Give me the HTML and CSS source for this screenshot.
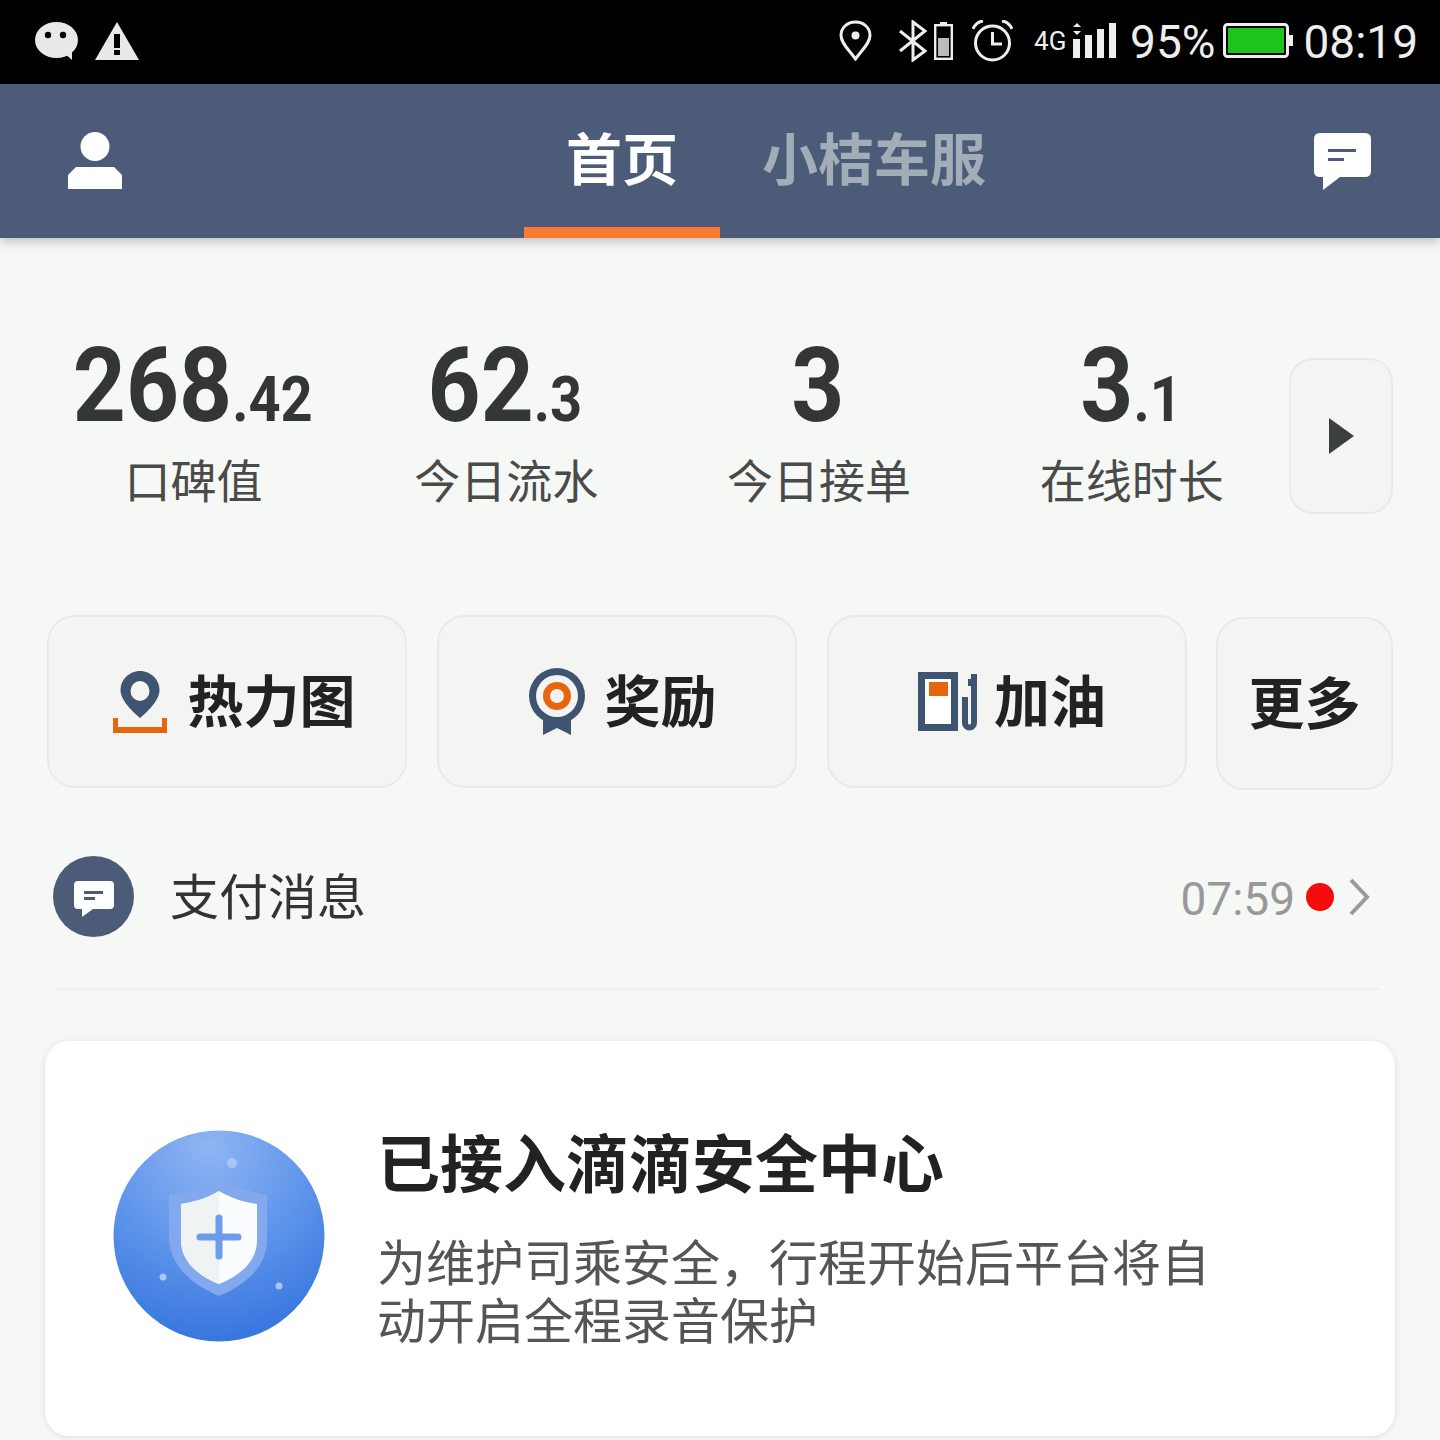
FILE: index.html
```html
<!DOCTYPE html>
<html lang="zh-CN">

<head>
    <meta charset="UTF-8">
    <meta name="viewport" content="width=device-width, initial-scale=1.0">
    <title>首页</title>
    <link rel="stylesheet" href="styles.css">
</head>

<body>
    <div class="status-bar">
        <svg class="st-wechat" viewBox="0 0 44 38"><ellipse cx="21.500" cy="18" rx="21.500" ry="18" fill="#e8e8e8"/><path d="M28 30 L37 38 L37 28 Z" fill="#e8e8e8"/><circle cx="13" cy="13" r="3.200" fill="#000"/><circle cx="28" cy="13" r="3.200" fill="#000"/></svg>
        <svg class="st-warning" viewBox="0 0 44 38"><path d="M22 0 L44 38 H0 Z" fill="#e8e8e8"/><rect x="19" y="12" width="6" height="14" fill="#000"/><rect x="19" y="28" width="6" height="5" fill="#000"/></svg>
        <div class="status-right">
            <svg class="st-pin" viewBox="0 0 33 41"><path d="M16.500 39 C10 30 2 23 2 15.500 C2 7.500 8.500 2 16.500 2 C24.500 2 31 7.500 31 15.500 C31 23 23 30 16.500 39 Z" fill="none" stroke="#eee" stroke-width="3"/><circle cx="16.500" cy="15.500" r="4" fill="#eee"/></svg>
            <svg class="st-bt" viewBox="0 0 31 42"><path d="M2 11 L27 31 L15 40 V2 L27 11 L2 31" fill="none" stroke="#eee" stroke-width="3"/></svg>
            <svg class="st-minibat" viewBox="0 0 19 38"><rect x="6" y="0" width="7" height="3" fill="#eee"/><rect x="1.200" y="3.200" width="16.600" height="33.600" fill="none" stroke="#eee" stroke-width="2.400"/><rect x="4" y="16" width="11" height="18" fill="#bbb"/></svg>
            <svg class="st-alarm" viewBox="0 0 41 42"><circle cx="20.500" cy="23" r="17" fill="none" stroke="#eee" stroke-width="3"/><path d="M20.500 12 V24 H30" fill="none" stroke="#eee" stroke-width="3"/><path d="M1 9 Q4 2 11 1 M40 9 Q37 2 30 1" fill="none" stroke="#eee" stroke-width="3"/></svg>
            <span class="st-net">4G</span>
            <svg class="st-signal" viewBox="0 0 43 35"><path d="M4 0 L8 4 H0 Z M4 12 L0 8 H8 Z" fill="#eee"/><rect x="0" y="16" width="7" height="19" fill="#eee"/><rect x="12" y="12" width="7" height="23" fill="#eee"/><rect x="24" y="6" width="7" height="29" fill="#eee"/><rect x="36" y="0" width="7" height="35" fill="#eee"/></svg>
            <span class="st-text st-percent">95%</span>
            <svg class="st-battery" viewBox="0 0 70 35"><rect x="1.500" y="1.500" width="63" height="32" rx="3" fill="#000" stroke="#eee" stroke-width="3"/><rect x="5" y="5" width="56" height="25" fill="#1ec41a"/><rect x="66" y="12" width="4" height="11" fill="#eee"/></svg>
            <span class="st-text st-time">08:19</span>
        </div>
    </div>

    <header>
        <svg class="icon-user" viewBox="0 0 54 58"><circle cx="27" cy="14.500" r="14.500" fill="#fff"/><path d="M8 35 H46 L54 43 V57 H0 V43 Z" fill="#fff"/></svg>
        <nav class="tabs">
            <a class="tab active">首页</a>
            <a class="tab">小桔车服</a>
        </nav>
        <svg class="icon-chat" viewBox="0 0 57 57"><path d="M6 0 H51 Q57 0 57 6 V38 Q57 44 51 44 H26 L9 57 V44 H6 Q0 44 0 38 V6 Q0 0 6 0 Z" fill="#fff"/><rect x="14" y="16" width="28" height="3" fill="#4c5c78"/><rect x="14" y="25" width="16" height="3" fill="#4c5c78"/></svg>
    </header>

    <main>
        <section class="stats">
            <div class="stat"><span class="stat-num">268<small>.42</small></span><span class="stat-label">口碑值</span></div>
            <div class="stat"><span class="stat-num">62<small>.3</small></span><span class="stat-label">今日流水</span></div>
            <div class="stat"><span class="stat-num">3</span><span class="stat-label">今日接单</span></div>
            <div class="stat"><span class="stat-num">3<small>.1</small></span><span class="stat-label">在线时长</span></div>
            <div class="stat-next"><svg viewBox="0 0 26 36"><path d="M1 0 L26 18 L1 36 Z" fill="#3b403c"/></svg></div>
        </section>

        <section class="actions">
            <div class="action shifted">
                <svg class="icon-heat" viewBox="0 0 55 64"><path d="M28 1 C17 1 8.500 10 8.500 20 C8.500 31 22 43 28 48 C34 43 47.500 31 47.500 20 C47.500 10 39 1 28 1 Z" fill="#3f5470"/><ellipse cx="28" cy="21" rx="9.500" ry="10" fill="#f4f5f3"/><path d="M1 48 H6 V57 H50 V48 H55 V63 H1 Z" fill="#e8650f"/></svg>
                <span>热力图</span>
            </div>
            <div class="action shifted">
                <svg class="icon-award" viewBox="0 0 58 67"><path d="M15 46 H43 V67 L29 60 L15 67 Z" fill="#3f5470"/><circle cx="29" cy="28" r="28" fill="#3f5470"/><circle cx="29" cy="28" r="21" fill="#f4f5f3"/><circle cx="29" cy="28" r="14" fill="#e8650f"/><circle cx="29" cy="28" r="7" fill="#eef3f1"/></svg>
                <span>奖励</span>
            </div>
            <div class="action shifted">
                <svg class="icon-gas" viewBox="0 0 60 60"><rect x="3.500" y="3.500" width="33" height="52" fill="#fff" stroke="#3f5470" stroke-width="7"/><rect x="11" y="10" width="19" height="14" fill="#e8650f"/><path d="M47 25 V51 A4.500 4.500 0 0 0 56 51 V2" fill="none" stroke="#3f5470" stroke-width="6"/><rect x="50" y="7" width="6" height="7" fill="#3f5470"/></svg>
                <span>加油</span>
            </div>
            <div class="action more"><span>更多</span></div>
        </section>

        <section class="message">
            <div class="message-icon"><svg viewBox="0 0 40 36"><path d="M4 0 H36 Q40 0 40 4 V24 Q40 28 36 28 H19 L8 36 V28 H4 Q0 28 0 24 V4 Q0 0 4 0 Z" fill="#fff"/><rect x="10" y="10" width="19" height="3" fill="#4c5c78"/><rect x="10" y="16" width="11" height="3" fill="#4c5c78"/></svg></div>
            <span class="message-title">支付消息</span>
            <span class="message-time">07:59</span>
            <span class="message-dot"></span>
            <svg class="message-arrow" viewBox="0 0 22 38"><path d="M3 2 L19 19 L3 36" fill="none" stroke="#9a9a9a" stroke-width="4"/></svg>
        </section>

        <section class="card">
            <svg class="card-icon" viewBox="0 0 212 212">
                <defs>
                    <radialGradient id="shieldBg" cx="45%" cy="8%" r="95%">
                        <stop offset="0" stop-color="#8fb5f3"/>
                        <stop offset="0.5" stop-color="#6096eb"/>
                        <stop offset="1" stop-color="#3474de"/>
                    </radialGradient>
                </defs>
                <circle cx="106" cy="106" r="105.500" fill="url(#shieldBg)"/>
                <circle cx="119" cy="33" r="5" fill="#a9c6f6"/>
                <circle cx="50" cy="147" r="3.500" fill="#a9c6f6"/>
                <circle cx="166" cy="156" r="3.500" fill="#a9c6f6"/>
                <path d="M106 47 C122 58 138 62 154 65 V110 C154 138 130 156 106 166 C82 156 58 138 56 110 V65 C74 62 90 58 106 47 Z" fill="#82a9ee"/>
                <path d="M106 61 C118 68 130 72 144 74 V110 C144 132 126 146 106 154 C86 146 68 132 68 110 V74 C82 72 94 68 106 61 Z" fill="#fbfcfd"/>
                <path d="M106 61 C94 68 82 72 68 74 V110 C68 132 86 146 106 154 Z" fill="#eff3f3"/>
                <path d="M106 88 V126 M87 107 H125" stroke="#6c9cec" stroke-width="7" stroke-linecap="round"/>
            </svg>
            <div class="card-body">
                <h2>已接入滴滴安全中心</h2>
                <p>为维护司乘安全&#65292;行程开始后平台将自<br>动开启全程录音保护</p>
            </div>
        </section>
    </main>
</body>

</html>
```

FILE: styles.css
```css
body, html {
    margin: 0;
    padding: 0;
    background-color: #f6f8f5;
    color: #333;
    font-family: "Noto Sans CJK SC", "Noto Sans", sans-serif;
}

body {
    height: 1440px;
    overflow: hidden;
}

svg {
    display: block;
    flex: none;
}

/* status bar */
.status-bar {
    background-color: #000;
    height: 84px;
    display: flex;
    align-items: center;
    padding: 0 22px 3px 35px;
    box-sizing: border-box;
}

.st-wechat {
    width: 44px;
    height: 38px;
}

.st-warning {
    width: 44px;
    height: 38px;
    margin-left: 16px;
}

.status-right {
    margin-left: auto;
    display: flex;
    align-items: center;
}

.st-pin {
    width: 33px;
    height: 41px;
}

.st-bt {
    width: 31px;
    height: 42px;
    margin-left: 26px;
}

.st-minibat {
    width: 19px;
    height: 38px;
    margin-left: 5px;
}

.st-alarm {
    width: 41px;
    height: 42px;
    margin-left: 19px;
}

.st-net {
    color: #eee;
    font-family: Roboto, sans-serif;
    font-size: 26px;
    margin-left: 21px;
    width: 39px;
}

.st-signal {
    width: 43px;
    height: 35px;
}

.st-text {
    color: #eee;
    font-family: Roboto, sans-serif;
    font-weight: 400;
    font-size: 46px;
    line-height: 50px;
    margin-top: 3px;
}

.st-percent {
    margin-left: 14px;
}

.st-battery {
    width: 70px;
    height: 35px;
    margin-left: 8px;
}

.st-time {
    margin-left: 10px;
}

/* header */
header {
    background-color: #4c5c78;
    height: 154px;
    display: flex;
    align-items: center;
    padding: 0 69px 0 68px;
    box-sizing: border-box;
    box-shadow: 0 4px 10px rgba(0, 0, 0, 0.22);
    position: relative;
}

.icon-user {
    width: 54px;
    height: 58px;
}

.icon-chat {
    width: 57px;
    height: 57px;
    margin-left: auto;
}

.tabs {
    display: flex;
    align-self: stretch;
    margin-left: 402px;
}

.tab {
    padding: 0 42px 11px;
    font-size: 56px;
    font-weight: 700;
    color: #a3adb8;
    display: flex;
    align-items: center;
}

.tab.active {
    color: #fff;
    border-bottom: 11px solid #f97a30;
    padding-bottom: 0;
}

/* stats */
main {
    padding: 120px 47px 0 37px;
}

.stats {
    display: flex;
    height: 156px;
}

.stat {
    width: 313px;
    display: flex;
    flex-direction: column;
    align-items: center;
}

.stat-num {
    display: block;
    height: 104px;
    font-family: Roboto, sans-serif;
    font-weight: 700;
    font-size: 104px;
    line-height: 104px;
    color: #333733;
    margin: -24px 2px 0 0;
    transform: scaleX(0.89);
}

.stat-num small {
    font-size: 63px;
    line-height: 0;
}

.stat-label {
    font-size: 46px;
    line-height: 64px;
    color: #4a4a4a;
    margin-top: 8px;
}

.stat-next {
    width: 104px;
    height: 156px;
    margin-left: 1px;
    box-sizing: border-box;
    background-color: #f3f5f2;
    border: 2px solid #e8ebe4;
    border-radius: 24px;
    display: flex;
    align-items: center;
    justify-content: center;
}

.stat-next svg {
    width: 26px;
    height: 36px;
}

/* action buttons */
.actions {
    display: flex;
    gap: 30px;
    margin: 101px 0 0 10px;
}

.action {
    width: 360px;
    height: 173px;
    box-sizing: border-box;
    background-color: #f4f5f3;
    border: 2px solid #e8ebe4;
    border-radius: 28px;
    display: flex;
    align-items: center;
    justify-content: center;
    font-size: 56px;
    font-weight: 700;
    color: #222;
}

.action span {
    margin-top: -8px;
}

.action.shifted {
    padding-left: 10px;
}

.action.more {
    width: 177px;
    margin: 2px 0 -2px -1px;
}

.icon-heat {
    width: 55px;
    height: 64px;
    margin: 0 21px 0 3px;
}

.icon-award {
    width: 58px;
    height: 67px;
    margin-right: 19px;
}

.icon-gas {
    width: 60px;
    height: 60px;
    margin-right: 16px;
}

/* message row */
.message {
    display: flex;
    align-items: center;
    height: 81px;
    margin: 68px 13px 0 21px;
    padding-bottom: 51px;
    border-bottom: 2px solid #eef0eb;
}

.message-icon {
    width: 81px;
    height: 81px;
    margin-left: -5px;
    border-radius: 50%;
    background-color: #4c5c78;
    display: flex;
    align-items: center;
    justify-content: center;
}

.message-icon svg {
    width: 40px;
    height: 36px;
    margin-top: 4px;
}

.message-title {
    margin: -6px 0 0 36px;
    font-size: 49px;
    color: #333;
}

.message-time {
    margin: 4px 0 0 auto;
    font-family: Roboto, sans-serif;
    font-size: 46px;
    color: #999;
}

.message-dot {
    width: 28px;
    height: 28px;
    border-radius: 50%;
    background-color: #f50d0d;
    margin-left: 11px;
}

.message-arrow {
    width: 22px;
    height: 38px;
    margin: 0 10px 0 14px;
}

/* card */
.card {
    width: 1350px;
    height: 395px;
    margin: 51px 0 0 8px;
    box-sizing: border-box;
    background-color: #fff;
    border-radius: 24px;
    box-shadow: 0 1px 6px rgba(0, 0, 0, 0.1);
    display: flex;
    align-items: center;
    padding: 0 0 5px 68px;
}

.card-icon {
    width: 212px;
    height: 212px;
}

.card-body {
    margin: 0 0 5px 52px;
}

.card-body h2 {
    margin: 0;
    font-size: 63px;
    line-height: 80px;
    font-weight: 700;
    color: #222;
}

.card-body p {
    margin: 31px 0 0;
    font-size: 49px;
    line-height: 58px;
    color: #555;
}
```
